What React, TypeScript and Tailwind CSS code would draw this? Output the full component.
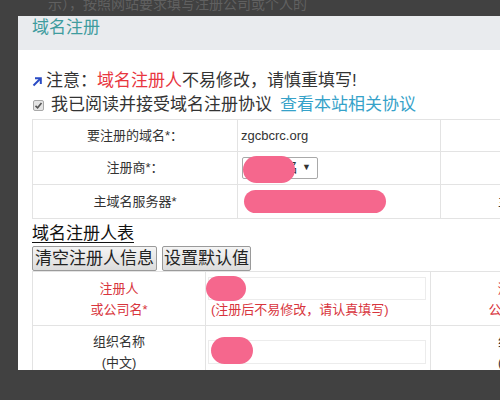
import React from "react";

const FONT = '"Liberation Sans", "Noto Sans CJK SC", sans-serif';

function Blob({ className }: { className: string }) {
  return <span className={"absolute rounded-full bg-[#f5678d] " + className} />;
}

export default function App() {
  return (
    <div
      className="w-[500px] h-[400px] bg-[#414141] overflow-hidden relative"
      style={{ fontFamily: FONT }}
    >
      <div className="h-[16px] overflow-hidden">
        <div className="pl-[48px] mt-[-5px] text-[14px] leading-[18px] text-[#606060] whitespace-nowrap">
          示），按照网站要求填写注册公司或个人的
        </div>
      </div>
      <div className="ml-[18px] w-[560px] h-[354px] bg-white overflow-hidden">
        <div className="h-[34px] bg-[#e9ebee] pl-[14px] pt-[2px]">
          <div className="text-[17px] leading-[20px] text-[#3f9c9e]">域名注册</div>
        </div>
        <div className="pl-[14px] pt-[19px]">
          <div className="flex items-center h-[24px] text-[17px] text-[#333]">
            <svg width="10" height="10" viewBox="0 0 10 10" className="mr-[4px] mt-[2px]">
              <path d="M1.5 8.5 L8 2" stroke="#2a4bc4" strokeWidth="2" fill="none" />
              <path d="M3 1.2 L8.8 1.2 L8.8 7" stroke="#2a4bc4" strokeWidth="2" fill="none" />
            </svg>
            <span>注意：</span>
            <span className="text-[#e8363f]">域名注册人</span>
            <span>不易修改，请慎重填写!</span>
          </div>
          <div className="flex items-center h-[24px] text-[17px] text-[#333]">
            <span className="relative ml-[1px] mr-[7px] w-[11px] h-[11px] rounded-[2px] border border-[#a8a8a8] bg-[#e4e4e4] flex items-center justify-center">
              <svg width="9" height="9" viewBox="0 0 9 9">
                <path d="M1.5 4.8 L3.6 6.8 L7.5 2" stroke="#555" strokeWidth="1.6" fill="none" />
              </svg>
            </span>
            <span>我已阅读并接受域名注册协议</span>
            <span className="ml-[8px] text-[#36a2c9]">查看本站相关协议</span>
          </div>
          <table className="mt-[2px] border-collapse table-fixed w-[560px] text-[13px] text-[#333]">
            <colgroup>
              <col className="w-[205px]" />
              <col className="w-[203px]" />
              <col />
            </colgroup>
            <tbody>
              <tr className="h-[32px]">
                <td className="border border-[#e3e3e3] text-center">要注册的域名*：</td>
                <td className="border border-[#e3e3e3] pl-[3px]">zgcbcrc.org</td>
                <td className="border border-[#e3e3e3]"></td>
              </tr>
              <tr className="h-[33px]">
                <td className="border border-[#e3e3e3] text-center">注册商*：</td>
                <td className="border border-[#e3e3e3] pl-[4px]">
                  <div className="relative w-[76px] h-[22px]">
                    <div className="w-[76px] h-[22px] border border-[#a9a9a9] rounded-[2px] flex items-center pl-[3px] text-[13px]">
                      <span>注册商名</span>
                      <span className="ml-[4px] text-[9px]">▼</span>
                    </div>
                    <Blob className="left-[1px] top-[-1px] w-[52px] h-[27px]" />
                  </div>
                </td>
                <td className="border border-[#e3e3e3]"></td>
              </tr>
              <tr className="h-[34px]">
                <td className="border border-[#e3e3e3] text-center">主域名服务器*</td>
                <td className="border border-[#e3e3e3] pl-[6px]">
                  <div className="relative h-[23px]">
                    <Blob className="left-0 top-0 w-[142px] h-[23px]" />
                  </div>
                </td>
                <td className="border border-[#e3e3e3] pl-[57px] whitespace-nowrap">主域名服务器</td>
              </tr>
            </tbody>
          </table>
          <div className="mt-[3px] h-[24px] leading-[24px] text-[17px] text-[#111] underline underline-offset-[3px]">
            域名注册人表
          </div>
          <div className="flex gap-[5px] h-[25px]">
            <button className="h-[25px] px-[2px] border border-[#9a9a9a] rounded-[2px] bg-gradient-to-b from-[#f4f4f4] to-[#dcdcdc] text-[17px] leading-[20px] text-[#222]">
              清空注册人信息
            </button>
            <button className="h-[25px] px-[1px] border border-[#9a9a9a] rounded-[2px] bg-gradient-to-b from-[#f4f4f4] to-[#dcdcdc] text-[17px] leading-[20px] text-[#222]">
              设置默认值
            </button>
          </div>
          <table className="border-collapse table-fixed w-[560px] text-[13px] text-[#333]">
            <colgroup>
              <col className="w-[173px]" />
              <col className="w-[225px]" />
              <col />
            </colgroup>
            <tbody>
              <tr className="h-[54px]">
                <td className="border border-[#e3e3e3] text-center text-[#d8353d] leading-[21px]">
                  注册人
                  <br />
                  或公司名*
                </td>
                <td className="border border-[#e3e3e3] pl-[2px] align-top pt-[5px]">
                  <div className="relative">
                    <div className="w-[218px] h-[23px] border border-[#ececec]" />
                    <Blob className="left-[-2px] top-[-1px] w-[40px] h-[25px]" />
                    <div className="pl-[3px] text-[#d8353d] leading-[19px]">(注册后不易修改，请认真填写)</div>
                  </div>
                </td>
                <td className="border border-[#e3e3e3] pl-[56px] text-center text-[#d8353d] leading-[21px] whitespace-nowrap">
                  <div className="w-[60px]">
                    注册人
                    <br />
                    公司名称*
                  </div>
                </td>
              </tr>
              <tr className="h-[52px]">
                <td className="border border-[#e3e3e3] text-center leading-[21px]">
                  组织名称
                  <br />
                  (中文)
                </td>
                <td className="border border-[#e3e3e3] pl-[2px]">
                  <div className="relative">
                    <div className="w-[218px] h-[24px] border border-[#ececec]" />
                    <Blob className="left-[3px] top-[-3px] w-[42px] h-[27px]" />
                  </div>
                </td>
                <td className="border border-[#e3e3e3] pl-[67px] leading-[21px] whitespace-nowrap">
                  组织名称
                  <br />
                  (英文)
                </td>
              </tr>
            </tbody>
          </table>
        </div>
      </div>
    </div>
  );
}
